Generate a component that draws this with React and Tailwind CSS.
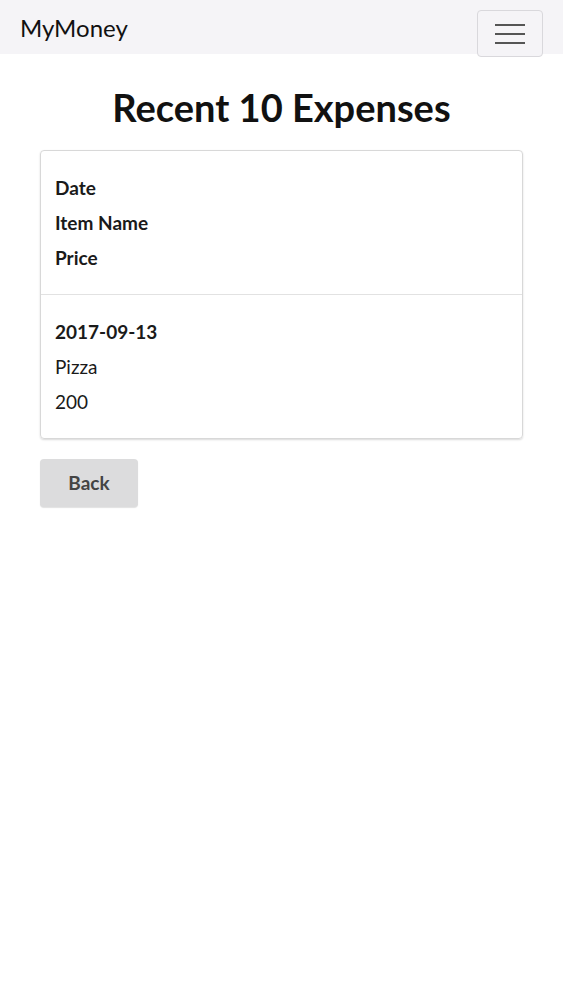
export default function App() {
  const font = { fontFamily: "Lato, 'Open Sans', sans-serif" };
  return (
    <div className="min-h-[1000px] bg-white text-[#1a1a1a]" style={font}>
      <nav className="flex h-[54px] items-start justify-between bg-[#f5f4f7] pl-[20px] pr-[20px]">
        <span className="mt-[15px] text-[24px] leading-[26px] text-[#111]">MyMoney</span>
        <button className="mt-[10px] flex h-[47px] w-[66px] flex-col items-center justify-center gap-[7px] rounded-[4px] border border-[#d9d8dc] bg-[#f5f4f7]">
          <span className="block h-[2px] w-[30px] bg-[#555]" />
          <span className="block h-[2px] w-[30px] bg-[#555]" />
          <span className="block h-[2px] w-[30px] bg-[#555]" />
        </button>
      </nav>
      <div className="px-[40px]">
        <h1 className="mt-[28px] mb-[18px] text-center text-[38px] font-bold leading-[50px] text-[#111]">
          Recent 10 Expenses
        </h1>
        <div className="rounded-[4px] border border-[#d8d8d8] shadow-[0_1px_2px_rgba(0,0,0,0.15)]">
          <div className="flex flex-col px-[14px] py-[19px] text-[19px] font-bold leading-[35px]">
            <span>Date</span>
            <span>Item Name</span>
            <span>Price</span>
          </div>
          <div className="border-t border-[#e2e2e2] flex flex-col px-[14px] py-[19px] text-[19px] leading-[35px]">
            <span className="font-bold">2017-09-13</span>
            <span>Pizza</span>
            <span>200</span>
          </div>
        </div>
        <button className="mt-[20px] h-[48px] w-[98px] rounded-[4px] bg-[#dcdcdd] text-[19px] font-bold text-[#444] shadow-[0_1px_1px_rgba(0,0,0,0.12)]">
          Back
        </button>
      </div>
    </div>
  );
}
